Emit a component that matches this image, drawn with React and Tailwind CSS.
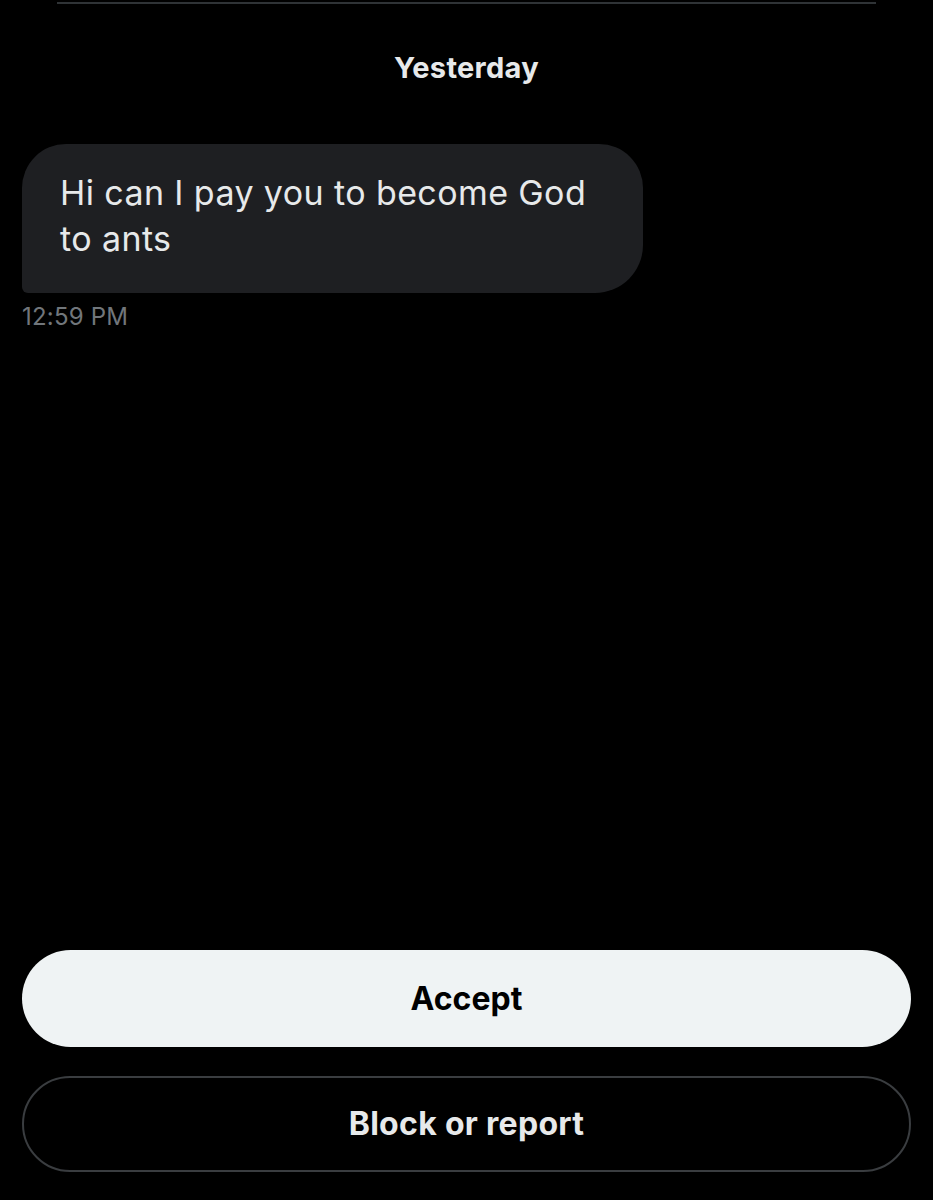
import React from "react";

const App = () => {
  return (
    <div className="w-[933px] h-[1200px] bg-black flex flex-col font-['Inter','Liberation_Sans',sans-serif] overflow-hidden">
      {/* top divider */}
      <div className="mx-[57px] mt-[2px] h-[2px] bg-[#2f3336]" />

      {/* date */}
      <div className="mt-[46px] text-center text-[29px] font-bold text-[#e7e9ea] leading-[36px] tracking-[0.3px]">
        Yesterday
      </div>

      {/* message */}
      <div className="mt-[58px] px-[22px]">
        <div className="w-[621px] h-[149px] bg-[#1e1f22] rounded-t-[44px] rounded-br-[48px] rounded-bl-[6px] pl-[38px] pr-[30px] pt-[26px] text-[34px] leading-[46px] tracking-[0.4px] text-[#e7e9ea]">
          Hi can I pay you to become God to ants
        </div>
        <div className="mt-[9px] text-[24px] leading-[30px] text-[#71767b] tracking-[0.2px]">12:59 PM</div>
      </div>

      <div className="flex-1" />

      {/* actions */}
      <div className="px-[22px] pb-[28px] flex flex-col gap-[29px]">
        <button className="h-[97px] w-full rounded-full bg-[#eff3f4] text-black text-[32px] font-bold">
          Accept
        </button>
        <button className="h-[96px] w-full rounded-full border-2 border-[#3a3d40] text-[#e7e9ea] text-[32px] font-bold tracking-[0.3px]">
          Block or report
        </button>
      </div>
    </div>
  );
};

export default App;
